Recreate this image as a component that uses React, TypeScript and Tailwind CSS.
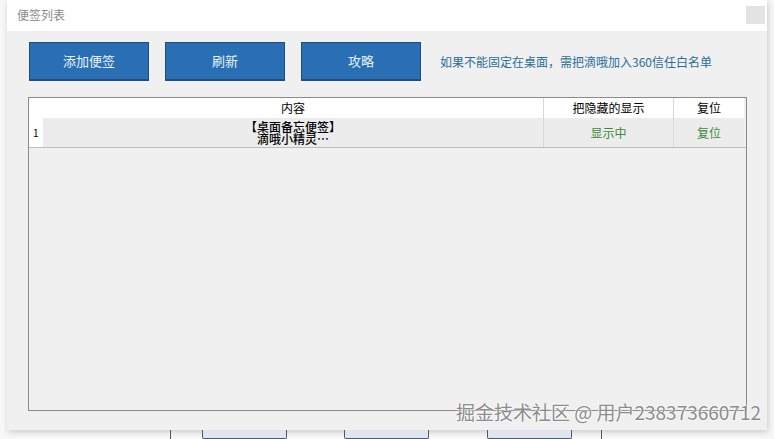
import React from "react";

const font = { fontFamily: '"Noto Sans CJK SC", "Noto Sans", sans-serif' };

export default function App() {
  return (
    <div className="relative w-[774px] h-[439px] overflow-hidden bg-[#f7f7f7]" style={font}>
      {/* Dialog */}
      <div className="ml-[7px] w-[760px] h-[430px] flex flex-col shadow-[1px_2px_6px_rgba(0,0,0,0.18)]">
        {/* Title bar */}
        <div className="h-[31px] bg-white flex items-center justify-between pl-[10px] pr-[2px]">
          <span className="text-[12px] text-[#8a8a8a] leading-none -mt-[1px]">便签列表</span>
          <div className="w-[19px] h-[18px] bg-[#e3e3e3] -mt-[1px]" />
        </div>

        {/* Body */}
        <div className="flex-1 bg-[#f0f0f0] pl-[22px] pr-[14px] pt-[11px]">
          <div className="flex items-center">
            {["添加便签", "刷新", "攻略"].map((t) => (
              <button
                key={t}
                className="w-[120px] h-[39px] mr-[16px] bg-[#2a6fb3] border border-[#1d4f82] border-b-2 text-[13px] text-[#e6f2ff] flex items-center justify-center"
              >
                {t}
              </button>
            ))}
            <span className="ml-[3px] mt-[1px] text-[12px] text-[#2a6f9a]">如果不能固定在桌面，需把滴哦加入360信任白名单</span>
          </div>

          {/* Table */}
          <div className="mt-[16px] -ml-[1px] w-[719px] h-[314px] border border-[#8a8a8a] bg-[#f0f0f0]">
            <div className="flex h-[20px] text-[12px] text-black leading-[20px]">
              <div className="w-[14px] bg-white" />
              <div className="w-[500px] bg-white text-center">内容</div>
              <div className="w-[130px] bg-white text-center border-l border-[#d8d8d8]">把隐藏的显示</div>
              <div className="w-[71px] bg-white text-center border-l border-[#d8d8d8]">复位</div>
            </div>
            <div className="flex h-[30px] text-[12px] border-b border-[#bdbdbd]">
              <div className="w-[14px] bg-white flex items-center pl-[4px] text-[10px] text-black">1</div>
              <div className="w-[500px] bg-[#ececec] flex items-center justify-center text-center whitespace-pre-line leading-[12px] text-black font-medium">
                {"【桌面备忘便签】\n滴哦小精灵…"}
              </div>
              <div className="w-[130px] bg-[#ececec] border-l border-[#d8d8d8] flex items-center justify-center text-[#3d8a3d]">显示中</div>
              <div className="w-[71px] bg-[#ececec] border-l border-[#d8d8d8] flex items-center justify-center text-[#3d8a3d]">复位</div>
            </div>
          </div>
        </div>
      </div>

      {/* Window behind, bottom edge */}
      <div className="flex h-[9px]">
        <div className="ml-[170px] w-px bg-[#555]" />
        <div className="ml-[31px] w-[85px] border-x border-b border-[#4a5a70] bg-[#e2e6ec] rounded-b-[2px]" />
        <div className="ml-[57px] w-[85px] border-x border-b border-[#4a5a70] bg-[#e2e6ec] rounded-b-[2px]" />
        <div className="ml-[58px] w-[85px] border-x border-b border-[#4a5a70] bg-[#e2e6ec] rounded-b-[2px]" />
        <div className="ml-[29px] w-px bg-[#555]" />
      </div>

      {/* Watermark */}
      <div
        className="absolute right-[13px] top-[400px] text-[19px] leading-[24px] text-[#8c8c8c] whitespace-nowrap"
        style={{ textShadow: "0 0 2px #fff, 0 0 2px #fff" }}
      >
        掘金技术社区 @ 用户238373660712
      </div>
    </div>
  );
}
